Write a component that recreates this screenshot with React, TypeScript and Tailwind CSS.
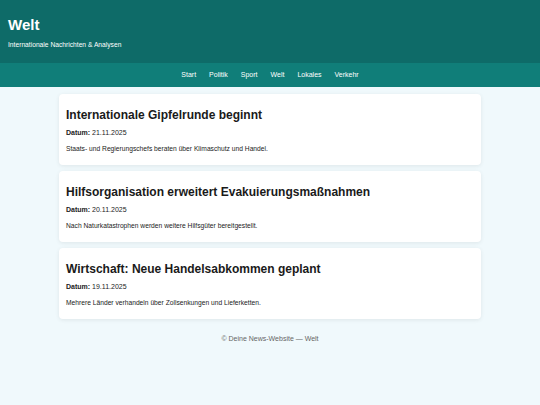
const articles = [
  {
    title: "Internationale Gipfelrunde beginnt",
    date: "21.11.2025",
    text: "Staats- und Regierungschefs beraten über Klimaschutz und Handel.",
  },
  {
    title: "Hilfsorganisation erweitert Evakuierungsmaßnahmen",
    date: "20.11.2025",
    text: "Nach Naturkatastrophen werden weitere Hilfsgüter bereitgestellt.",
  },
  {
    title: "Wirtschaft: Neue Handelsabkommen geplant",
    date: "19.11.2025",
    text: "Mehrere Länder verhandeln über Zollsenkungen und Lieferketten.",
  },
];

const nav = ["Start", "Politik", "Sport", "Welt", "Lokales", "Verkehr"];

export default function App() {
  return (
    <div className="min-h-[405px] bg-[#f0f9fc] font-['Liberation_Sans',Arial,sans-serif]">
      <header className="h-[63px] bg-[#0e6b68] px-[8px] pt-[16px] text-white">
        <h1 className="text-[15px] font-bold leading-[18px]">Welt</h1>
        <p className="mt-[6px] text-[6.7px] leading-[9px]">Internationale Nachrichten &amp; Analysen</p>
      </header>
      <nav className="flex h-[24px] items-center justify-center gap-[13px] bg-[#107e79] text-[7px] text-white">
        {nav.map((n) => (
          <span key={n}>{n}</span>
        ))}
      </nav>
      <main className="mx-auto flex w-[422px] flex-col gap-[6px] pt-[7px]">
        {articles.map((a) => (
          <article
            key={a.title}
            className="h-[71px] rounded-[4px] bg-white px-[7px] pt-[14px] shadow-[0_1px_4px_rgba(0,0,0,0.08)]"
          >
            <h2 className="text-[12px] font-bold leading-[14px] text-[#1a1a1a]">{a.title}</h2>
            <p className="mt-[6px] text-[7px] leading-[9px] text-[#222]">
              <span className="font-bold">Datum:</span> {a.date}
            </p>
            <p className="mt-[7px] text-[6.7px] leading-[9px] text-[#222]">{a.text}</p>
          </article>
        ))}
      </main>
      <footer className="pt-[15px] text-center text-[7px] leading-[9px] text-[#666]">
        © Deine News-Website — Welt
      </footer>
    </div>
  );
}
